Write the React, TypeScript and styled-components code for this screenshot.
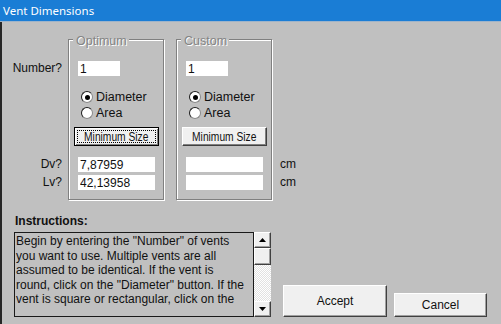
import React from "react"
import styled, { createGlobalStyle } from "styled-components"

const GlobalStyle = createGlobalStyle`
  html, body {
    margin: 0;
    padding: 0;
    background: #c0c0c0;
  }
  body {
    font-family: "Liberation Sans", Arial, sans-serif;
    font-size: 12px;
    color: #111;
  }
`

// only the part of the help text that is scrolled into view
const instructions =
  'Begin by entering the "Number" of vents you want to use. Multiple vents are all assumed to be identical. If the vent is round, click on the "Diameter" button. If the vent is square or rectangular, click on the'

type GroupProps = {
  title: string
  number: string
  dv: string
  lv: string
  focused?: boolean
}

const VentGroup: React.FC<GroupProps> = ({ title, number, dv, lv, focused }) => (
  <GroupBox>
    <Legend>{title}</Legend>
    <NumberField value={number} readOnly />
    <RadioList>
      <RadioRow>
        <RadioCircle $checked />
        Diameter
      </RadioRow>
      <RadioRow>
        <RadioCircle />
        Area
      </RadioRow>
    </RadioList>
    <SizeButton $focused={focused}>
      <NarrowText>Minimum Size</NarrowText>
    </SizeButton>
    <ValueField value={dv} readOnly $first />
    <ValueField value={lv} readOnly />
  </GroupBox>
)

const Arrow: React.FC<{ down?: boolean }> = ({ down }) => (
  <svg width="7" height="4" viewBox="0 0 7 4">
    <polygon points={down ? "0,0 7,0 3.5,4" : "0,4 7,4 3.5,0"} fill="#000" />
  </svg>
)

export default function App() {
  return (
    <Window>
      <GlobalStyle />
      <TitleBar>Vent Dimensions</TitleBar>
      <Body>
        <TopArea>
          <LabelColumn>
            <FieldLabel>Number?</FieldLabel>
            <FieldLabel $gap={81}>Dv?</FieldLabel>
            <FieldLabel $gap={3}>Lv?</FieldLabel>
          </LabelColumn>
          <VentGroup title="Optimum" number="1" dv="7,87959" lv="42,13958" focused />
          <VentGroup title="Custom" number="1" dv="" lv="" />
          <UnitColumn>
            <FieldLabel>cm</FieldLabel>
            <FieldLabel $gap={3}>cm</FieldLabel>
          </UnitColumn>
        </TopArea>
        <BottomRow>
          <InstructionsColumn>
            <InstructionsLabel>Instructions:</InstructionsLabel>
            <TextPanel>
              <TextArea>{instructions}</TextArea>
              <ScrollBar>
                <ScrollButton>
                  <Arrow />
                </ScrollButton>
                <ScrollThumb />
                <ScrollTrack />
                <ScrollButton>
                  <Arrow down />
                </ScrollButton>
              </ScrollBar>
            </TextPanel>
          </InstructionsColumn>
          <DialogButton $width={104} $height={32} $gap={12}>
            Accept
          </DialogButton>
          <DialogButton $width={93} $height={24} $gap={7}>
            Cancel
          </DialogButton>
        </BottomRow>
      </Body>
    </Window>
  )
}

const Window = styled.div`
  width: 501px;
  height: 324px;
  display: flex;
  flex-direction: column;
  overflow: hidden;
  background: #c0c0c0;
`

const TitleBar = styled.div`
  flex: none;
  height: 21px;
  padding-left: 3px;
  background: #1a7dd5;
  border-bottom: 1px solid #9fb4c9;
  color: #fff;
  font-family: "Noto Sans", sans-serif;
  font-size: 11.5px;
  line-height: 21px;
`

const Body = styled.div`
  flex: 1;
  display: flex;
  flex-direction: column;
  border-left: 2px solid #262626;
  padding: 17px 0 7px 11px;
`

const TopArea = styled.div`
  display: flex;
  align-items: flex-start;
`

const LabelColumn = styled.div`
  width: 49px;
  margin-right: 6px;
  padding-top: 22px;
  display: flex;
  flex-direction: column;
  align-items: flex-end;
`

const UnitColumn = styled.div`
  margin-left: 8px;
  padding-top: 118px;
  display: flex;
  flex-direction: column;
`

const FieldLabel = styled.div<{ $gap?: number }>`
  height: 15px;
  line-height: 15px;
  margin-top: ${({ $gap }) => $gap ?? 0}px;
  white-space: nowrap;
`

const GroupBox = styled.div`
  box-sizing: border-box;
  width: 96px;
  height: 161px;
  margin-right: 12px;
  padding-left: 9px;
  display: flex;
  flex-direction: column;
  align-items: flex-start;
  border: 1px solid #808080;
  box-shadow: inset 1px 1px 0 #fff, 1px 1px 0 #fff;

  & + & {
    margin-right: 0;
  }
`

const Legend = styled.div`
  margin: -6px 0 0 -5px;
  padding: 0 2px 0 3px;
  background: #c0c0c0;
  color: #848484;
  text-shadow: 1px 1px 0 #fff;
  line-height: 14px;
  font-size: 12.5px;
`

const fieldBase = `
  box-sizing: border-box;
  height: 15px;
  padding: 0 2px;
  border: none;
  outline: none;
  background: #fff;
  color: #111;
  font-family: "Liberation Sans", Arial, sans-serif;
  font-size: 12px;
`

const NumberField = styled.input`
  ${fieldBase}
  width: 42px;
  margin-top: 13px;
`

const ValueField = styled.input<{ $first?: boolean }>`
  ${fieldBase}
  width: 77px;
  margin-top: ${({ $first }) => ($first ? 11 : 3)}px;
`

const RadioList = styled.div`
  margin: 13px 0 0 3px;
  display: flex;
  flex-direction: column;
`

const RadioRow = styled.div`
  height: 16px;
  display: flex;
  align-items: center;
  font-size: 12.5px;
`

const RadioCircle = styled.span<{ $checked?: boolean }>`
  box-sizing: border-box;
  width: 12px;
  height: 12px;
  margin-right: 3px;
  border-radius: 50%;
  background: #fff;
  border: 1.5px solid #1c1c1c;
  border-right-color: #8a8a8a;
  border-bottom-color: #8a8a8a;
  display: flex;
  align-items: center;
  justify-content: center;

  &::after {
    content: "";
    width: 5px;
    height: 5px;
    border-radius: 50%;
    background: #000;
    display: ${({ $checked }) => ($checked ? "block" : "none")};
  }
`

const SizeButton = styled.div<{ $focused?: boolean }>`
  position: relative;
  box-sizing: border-box;
  width: 85px;
  height: 19px;
  margin: 6px 0 0 -4px;
  display: flex;
  align-items: center;
  justify-content: center;
  background: #f0f0f0;
  color: #111;
  border: 1px solid;
  border-color: ${({ $focused }) =>
    $focused ? "#000" : "#fff #404040 #404040 #fff"};
  box-shadow: ${({ $focused }) =>
    $focused
      ? "inset 1px 1px 0 #fff, inset -1px -1px 0 #808080"
      : "inset -1px -1px 0 #808080"};

  &::after {
    content: "";
    position: absolute;
    inset: 2px;
    border: 1px dotted #000;
    display: ${({ $focused }) => ($focused ? "block" : "none")};
  }
`

const NarrowText = styled.span`
  display: inline-block;
  white-space: nowrap;
  font-size: 12.5px;
  transform: scaleX(0.82);
`

const BottomRow = styled.div`
  margin-top: 14px;
  display: flex;
  align-items: flex-end;
`

const InstructionsColumn = styled.div`
  display: flex;
  flex-direction: column;
  margin-left: 1px;
`

const InstructionsLabel = styled.div`
  padding-left: 1px;
  font-weight: bold;
  line-height: 14px;
`

const TextPanel = styled.div`
  margin-top: 4px;
  height: 85px;
  display: flex;
`

const TextArea = styled.div`
  box-sizing: border-box;
  width: 240px;
  height: 85px;
  padding: 1px 4px 0 1px;
  border: 1px solid #1a1a1a;
  line-height: 14.5px;
  overflow: hidden;
`

const ScrollBar = styled.div`
  width: 17px;
  display: flex;
  flex-direction: column;
`

const bevel = `
  box-sizing: border-box;
  background: #f0f0f0;
  border: 1px solid;
  border-color: #fff #404040 #404040 #fff;
  box-shadow: inset -1px -1px 0 #a0a0a0;
`

const ScrollButton = styled.div`
  ${bevel}
  height: 16px;
  display: flex;
  align-items: center;
  justify-content: center;
`

const ScrollThumb = styled.div`
  ${bevel}
  height: 17px;
`

const ScrollTrack = styled.div`
  flex: 1;
  background: repeating-conic-gradient(#fff 0 25%, #e2e2e2 0 50%) 0 0 / 2px 2px;
`

const DialogButton = styled.div<{ $width: number; $height: number; $gap: number }>`
  ${bevel}
  width: ${({ $width }) => $width}px;
  height: ${({ $height }) => $height}px;
  margin-left: ${({ $gap }) => $gap}px;
  display: flex;
  align-items: center;
  justify-content: center;
  font-size: 12px;
  color: #111;
`
